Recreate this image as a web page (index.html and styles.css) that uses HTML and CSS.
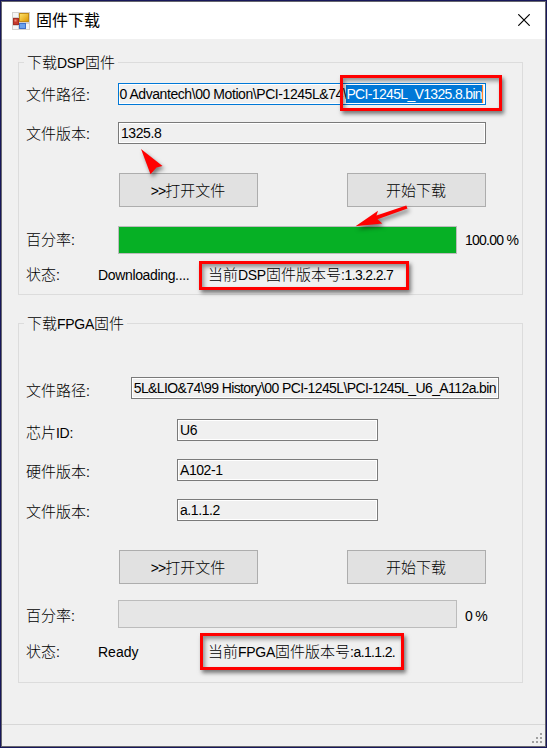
FILE: index.html
```html
<!DOCTYPE html>
<html lang="zh-CN">
<head>
<meta charset="utf-8">
<title>固件下载</title>
<link rel="stylesheet" href="styles.css">
</head>
<body>
<div class="window">
  <header class="titlebar">
    <svg class="app-icon" width="18" height="18" viewBox="0 0 18 18">
      <defs>
        <linearGradient id="gold" x2="1" y2="1"><stop stop-color="#ffe56c"/><stop offset="1" stop-color="#dc9500"/></linearGradient>
      </defs>
      <rect width="18" height="18" fill="#d4d1cf"/>
      <path d="M1 1h5v4H1zM1 14h5v3H1zM14 12h3v5h-3z" fill="#f5f5f5"/>
      <rect x="7" y="1" width="10" height="9" fill="#fff4bd"/>
      <rect x="7.500" y="1.500" width="9" height="8" fill="url(#gold)" stroke="#c18b16"/>
      <rect x="1.500" y="6.500" width="5" height="6" fill="#c83a2b" stroke="#a22d25"/>
      <rect x="2.500" y="7.500" width="2" height="2" fill="#ec8a7c"/>
      <rect x="7.500" y="11.500" width="6" height="5" fill="#6ba1ed" stroke="#3e70ca"/>
    </svg>
    <h1 class="title">固件下载</h1>
    <svg class="close" width="12" height="12" viewBox="0 0 12 12"><path d="M.3.3l11.400 11.400M11.700.3L.3 11.700" stroke="#000" stroke-width="1.200"/></svg>
  </header>

  <main class="content">
    <section class="group dsp">
      <h2 class="legend"><span class="zh">下载</span>DSP<span class="zh">固件</span></h2>
      <div class="row path"><span class="label"><span class="zh">文件路径</span>:</span><div class="field focused"><span class="value">0 Advantech\00 Motion\PCI-1245L&amp;74\<span class="selected">PCI-1245L_V1325.8.bin</span></span></div></div>
      <div class="row version"><span class="label"><span class="zh">文件版本</span>:</span><div class="field"><span class="value">1325.8</span></div></div>
      <div class="buttons"><button>&gt;&gt;<span class="zh">打开文件</span></button><button><span class="zh">开始下载</span></button></div>
      <div class="row percent"><span class="label"><span class="zh">百分率</span>:</span><div class="progress"><div class="bar"></div></div><span class="amount">100.00 %</span></div>
      <div class="row status"><span class="label"><span class="zh">状态</span>:</span><span class="state downloading">Downloading....</span><span class="current"><span class="zh">当前</span>DSP<span class="zh">固件版本号</span>:<span class="number">1.3.2.2.7</span></span></div>
    </section>

    <section class="group fpga">
      <h2 class="legend"><span class="zh">下载</span>FPGA<span class="zh">固件</span></h2>
      <div class="row path"><span class="label"><span class="zh">文件路径</span>:</span><div class="field"><span class="value">5L&amp;LIO&amp;74\99 History\00 PCI-1245L\PCI-1245L_U6_A112a.bin</span></div></div>
      <div class="row detail"><span class="label chip"><span class="zh">芯片</span>ID:</span><div class="field"><span class="value">U6</span></div></div>
      <div class="row detail"><span class="label"><span class="zh">硬件版本</span>:</span><div class="field"><span class="value">A102-1</span></div></div>
      <div class="row detail"><span class="label"><span class="zh">文件版本</span>:</span><div class="field"><span class="value">a.1.1.2</span></div></div>
      <div class="buttons"><button>&gt;&gt;<span class="zh">打开文件</span></button><button><span class="zh">开始下载</span></button></div>
      <div class="row percent"><span class="label"><span class="zh">百分率</span>:</span><div class="progress"></div><span class="amount">0 %</span></div>
      <div class="row status"><span class="label"><span class="zh">状态</span>:</span><span class="state ready">Ready</span><span class="current"><span class="zh">当前</span>FPGA<span class="zh">固件版本号</span>:<span class="number">a.1.1.2.</span></span></div>
    </section>
  </main>

  <footer class="statusbar">
    <svg width="11" height="11" viewBox="0 0 11 11" fill="#a0a0a0"><path d="M8 0h2v2H8zM4 4h2v2H4zM8 4h2v2H8zM0 8h2v2H0zM4 8h2v2H4zM8 8h2v2H8z"/></svg>
  </footer>
</div>

<div class="mark mark-file"></div>
<div class="mark mark-dsp"></div>
<div class="mark mark-fpga"></div>
<svg class="arrows" width="547" height="748" viewBox="0 0 547 748" fill="#f00">
  <path d="M141 149l21.500 17-6 1.500-6 6.800z"/>
  <path d="M355.500 226.300L378 210.800l-1.500 4.600L406.300 205.500l1.200 2.900L377.500 219.200l4.800 4.300z"/>
</svg>
</body>
</html>
```
FILE: styles.css
```css
* { box-sizing: border-box; }

body {
  margin: 0;
  width: 547px;
  height: 748px;
  overflow: hidden;
  position: relative;
  background: #17175a;
  font: 14px/20px "Liberation Sans", "Noto Sans CJK SC", sans-serif;
  letter-spacing: -.3px;
  color: #000;
}

h1, h2 { margin: 0; font-weight: 400; }

.window {
  width: 545px;
  height: 746px;
  margin: 1px 0 0 1px;
  border: 1px solid #66666e;
  background: #f0f0f0;
  display: flex;
  flex-direction: column;
}

.titlebar {
  height: 37px;
  flex: none;
  background: #fff;
  display: flex;
  align-items: center;
  padding: 0 14px 0 10px;
}

.title {
  margin: -3px 0 0 6px;
  flex: 1;
  font: 16px/24px "Noto Sans CJK SC", sans-serif;
  letter-spacing: 0;
}

.close { margin: -1px 1px 0 0; }

.content { flex: 1; padding: 23px 0 0 16px; }

.group {
  width: 505px;
  border: 1px solid #dcdcdc;
  padding-left: 7px;
}

.dsp { height: 233px; }
.fpga { height: 360px; margin-top: 28px; }

.legend {
  width: max-content;
  height: 20px;
  margin: -11px 0 0 -2px;
  padding: 0 3px;
  font-size: 14px;
  line-height: 20px;
  background: #f0f0f0;
  white-space: nowrap;
}

.zh { font-family: "Noto Sans CJK SC", sans-serif; font-size: 15px; font-weight: 300; line-height: 20px; letter-spacing: 0; }

.row { display: flex; height: 22px; white-space: nowrap; }

.label { width: 92px; flex: none; padding-top: 1px; }

.field {
  width: 368px;
  height: 22px;
  border: 1px solid #7a7a7a;
  box-shadow: inset 0 0 0 1px #fff;
  padding: 0 2px;
  display: flex;
  align-items: center;
  overflow: hidden;
}

.focused { border-color: #0078d7; justify-content: flex-end; }
.value { line-height: 18px; letter-spacing: -.43px; }
.selected { display: inline-block; height: 18px; background: #0078d7; color: #fff; border-right: 1px solid #ff8728; letter-spacing: -.66px; }

.dsp .path { margin-top: 11px; }
.dsp .version { margin-top: 17px; }
.dsp .buttons { margin-top: 29px; }

.buttons { display: flex; gap: 89px; padding-left: 93px; }

button {
  width: 139px;
  height: 34px;
  padding: 0 1px 0 0;
  border: 1px solid #adadad;
  background: #e1e1e1;
  color: #000;
  font: inherit;
  letter-spacing: -.9px;
}

.percent { height: 28px; margin-top: 19px; }
.percent .label { padding-top: 3px; }
.progress { width: 339px; height: 28px; padding: 0; border: 1px solid #bcbcbc; background: #e6e6e6; }
.bar { height: 100%; background: #06b025; }
.amount { margin-left: 8px; padding-top: 4px; letter-spacing: -.75px; }
.fpga .amount { padding-top: 6px; }

.status { margin-top: 10px; }
.status .label { width: 72px; padding: 0; }
.state { width: 110px; padding-top: 1px; }
.downloading { letter-spacing: -.35px; }
.ready { letter-spacing: 0; }
.number { letter-spacing: -.65px; }

.fpga .path { margin-top: 44px; }
.fpga .path .label { width: 105px; padding-top: 3px; }
.fpga .path .field { justify-content: flex-end; }
.fpga .path .value { letter-spacing: -.6px; }
.detail { margin-top: 18px; }
.fpga .path + .detail { margin-top: 20px; }
.detail .label { width: 151px; padding-top: 2px; }
.fpga .chip { padding-top: 3px; }
.detail .field { width: 201px; }
.fpga .buttons { margin-top: 29px; }
.fpga .percent { margin-top: 16px; }
.fpga .percent .label { padding-top: 5px; }
.fpga .status { margin-top: 13px; }

.statusbar {
  height: 22px;
  border-top: 1px solid #d7d7d7;
  display: flex;
  justify-content: flex-end;
  align-items: flex-end;
  padding: 0 2px 2px 0;
}

.mark {
  position: absolute;
  border: 3px solid #f00;
  box-shadow: 2px 3px 4px rgba(0, 0, 0, .5), inset 2px 3px 4px rgba(0, 0, 0, .4);
}
.mark-file { left: 340px; top: 75px; width: 162px; height: 36px; }
.mark-dsp { left: 199px; top: 261px; width: 210px; height: 29px; }
.mark-fpga { left: 200px; top: 633px; width: 204px; height: 37px; }

.arrows { position: absolute; left: 0; top: 0; filter: drop-shadow(2px 3px 2px rgba(0, 0, 0, .5)); }
```
